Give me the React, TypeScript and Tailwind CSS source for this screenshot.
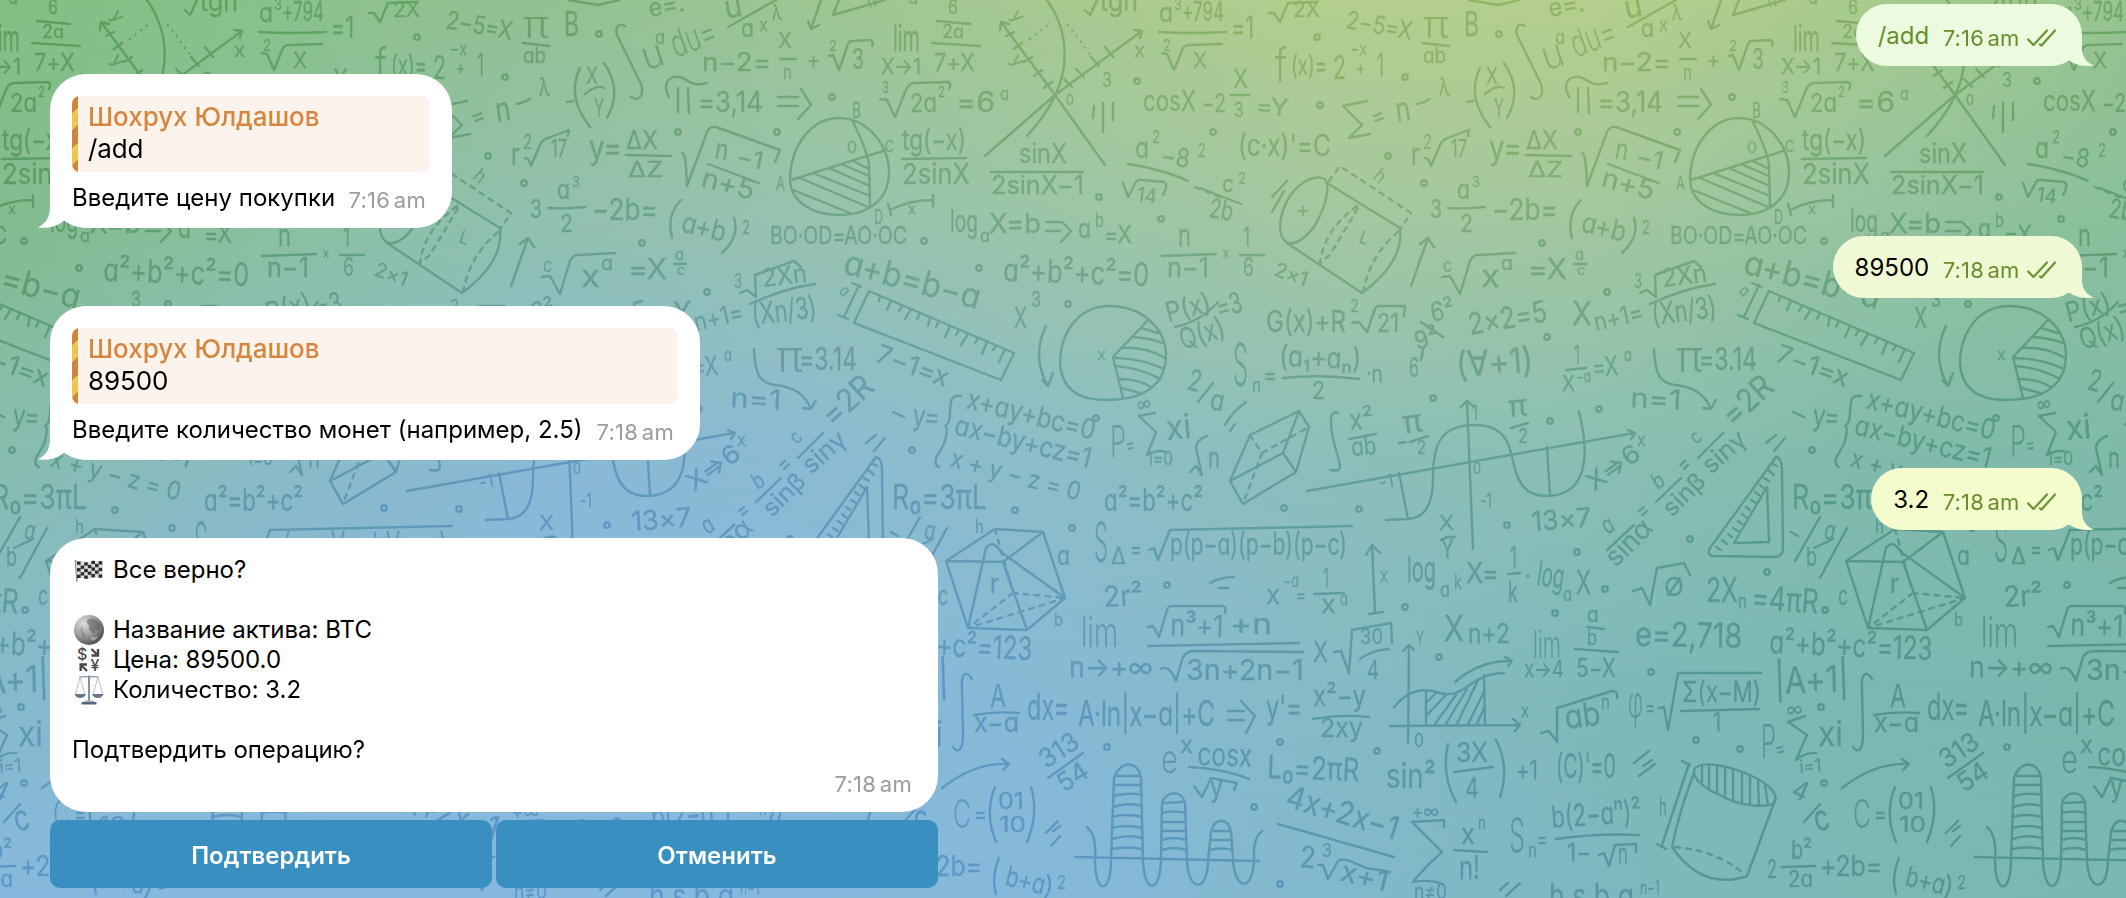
import type { ReactNode } from "react";

/* ---------- Wallpaper ---------- */

const STOPS = [0, 266, 531, 797, 1063, 1329, 1595, 1860, 2126];
const MESH: { y: number; colors: string[] }[] = [
  { y: 0, colors: ["#85be84", "#8ac18b", "#93c292", "#9dc693", "#a8ca90", "#b4cf8e", "#b5cf8d", "#a9cb8e", "#97c48f"] },
  { y: 225, colors: ["#84bc90", "#8ac0a0", "#91c0b0", "#96c2b0", "#9bc5a8", "#a3c7a1", "#a2c79f", "#95c3a2", "#89bf9b"] },
  { y: 449, colors: ["#87bdae", "#8abbc4", "#89b9d5", "#8bbbd3", "#8dbec6", "#8dbfba", "#8bbfb4", "#82bbac", "#80bbaa"] },
  { y: 674, colors: ["#86bac8", "#87b9da", "#87b9dc", "#87b9dc", "#88bad4", "#86bbc4", "#7fb9b9", "#7cb8b2", "#7bb7ae"] },
  { y: 898, colors: ["#86b8dd", "#86b8dd", "#86b8dd", "#86b8dd", "#85b8d9", "#82b8cc", "#7fb8bf", "#7cb8b4", "#7ab7b0"] },
];

// text, x, baseline, width, font size, rotation
type Note = [string, number, number, number, number, number?];

const NOTES: Note[] = [
  ["6", 948, 14, 10, 20], ["2a", 942, 38, 22, 18], ["7+X", 934, 71, 41, 24],
  ["lim", 893, 51, 27, 36], ["X→1", 881, 74, 40, 22],
  ["n−2=", 702, 71, 69, 25], ["X", 778, 48, 14, 22], ["n", 783, 79, 9, 20], ["+", 807, 68, 13, 24], ["2", 829, 51, 8, 15], ["3", 852, 69, 12, 28],
  ["u", 646, 71, 22, 40, -18], ["a", 655, 44, 10, 20], ["du=", 676, 58, 46, 38, -20],
  ["u", 726, 19, 18, 32, -10], ["a", 741, 37, 13, 25], ["x", 759, 31, 9, 17], ["λ", 772, 20, 10, 22],
  ["n", 869, 8, 9, 18, -15], ["a", 908, 4, 10, 20], ["e=.", 650, 17, 36, 25, -10],
  ["=3,14", 698, 112, 65, 29], ["B", 852, 118, 9, 22],
  ["O", 847, 153, 10, 16], ["C", 885, 152, 9, 16], ["A", 776, 190, 9, 18], ["D", 874, 224, 9, 20], ["x", 908, 214, 8, 14],
  ["3", 882, 93, 7, 16], ["2a", 910, 112, 27, 26], ["2", 938, 97, 7, 14], ["=6", 956, 112, 39, 28], ["a", 1000, 100, 9, 18],
  ["y", 1010, 16, 10, 18, 50], ["y", 1010, 60, 11, 18, 50], ["x", 1134, 57, 11, 20], ["0", 1066, 105, 8, 15], ["3", 1102, 87, 10, 20],
  ["tgn", 1100, 11, 38, 28],
  ["a", 1159, 22, 14, 27], ["3", 1174, 10, 8, 16], ["+794", 1182, 21, 42, 27], ["=1", 1231, 38, 23, 30], ["2", 1163, 51, 8, 16], ["X", 1193, 68, 14, 22],
  ["cosX", 1143, 111, 53, 28], ["−2", 1202, 112, 24, 26], ["X", 1233, 88, 15, 26], ["3", 1233, 117, 11, 20], ["=Y", 1255, 114, 33, 24, 4],
  ["y=", 1489, 159, 33, 33], ["ΔX", 626, 149, 32, 25], ["ΔZ", 628, 177, 35, 22],
  ["n", 714, 158, 13, 28, 10], ["−1", 735, 164, 27, 24, 12], ["n+5", 700, 186, 54, 27, 15],
  ["3", 1430, 218, 12, 26], ["a", 1457, 199, 13, 26], ["3", 1472, 187, 8, 15], ["2", 1460, 232, 13, 24], ["−2b=", 1492, 220, 66, 30],
  ["a+b", 680, 231, 45, 28, 14], ["2", 742, 234, 8, 18], ["BO·OD=AO·OC", 770, 244, 137, 24],
  ["log", 950, 232, 28, 31], ["a", 980, 242, 10, 18], ["X=b", 989, 233, 52, 27], ["a", 1078, 238, 13, 26], ["b", 1095, 227, 9, 19], ["=X", 1104, 243, 28, 24],
  ["tg(−x)", 902, 150, 64, 29], ["2sinX", 902, 184, 68, 28], ["sinX", 1019, 163, 48, 27], ["2sinX−1", 991, 194, 93, 25],
  ["a", 1135, 158, 14, 29], ["2", 1152, 143, 8, 17], ["−8", 1160, 164, 29, 26, 8], ["2", 1198, 157, 8, 18], ["14", 1136, 201, 20, 20, 8],
  ["c", 1222, 192, 12, 24], ["2", 1238, 184, 8, 16], ["2b", 1208, 217, 24, 27, 10],
  ["(c·x)'=C", 1238, 156, 93, 30],
  ["=", 1374, 126, 14, 24, -20], ["n", 1397, 122, 15, 34, -8], ["λ", 1439, 96, 11, 25],
  ["X", 1486, 84, 12, 23], ["Y", 1494, 117, 10, 25],
  ["f", 1275, 82, 12, 48], ["(x)=", 1291, 75, 36, 27], ["2", 1333, 79, 13, 32], ["−x", 1350, 55, 17, 18], ["+", 1356, 75, 9, 20], ["1", 1377, 76, 7, 31],
  ["2X", 1293, 17, 27, 22], ["2−5=X", 1345, 28, 67, 25, 10],
  ["π", 1423, 38, 26, 38], ["ab", 1423, 63, 23, 22], ["B", 1464, 36, 15, 34],
  ["r", 1411, 165, 9, 30], ["2", 1423, 149, 9, 20], ["17", 1451, 157, 16, 24],
  ["h", 1372, 178, 10, 20, 40], ["+", 1297, 217, 12, 22], ["L", 1358, 242, 9, 18, 20], ["2×1", 1273, 275, 34, 20, 20],
  ["n", 1178, 246, 13, 31], ["n−1", 1167, 277, 42, 27], ["×", 1222, 259, 8, 18], ["1", 1243, 246, 7, 25], ["6", 1243, 276, 11, 26],
  ["a²+b²+c²=0", 1003, 281, 146, 32, 2],
  ["c", 1443, 272, 9, 20], ["x", 1481, 287, 19, 30], ["a", 1501, 270, 12, 19], ["=X", 1528, 279, 39, 28], ["a", 1575, 260, 9, 15], ["c", 1577, 275, 8, 14],
  ["a+b=b−a", 842, 273, 140, 34, 15], ["a", 838, 292, 8, 17, 45],
  ["3", 734, 288, 8, 20], ["2Xn", 763, 287, 45, 25, -7], ["(Xn/3)", 753, 325, 65, 30, -7], ["X", 1572, 325, 20, 33], ["n+1=", 1596, 331, 50, 25, -13],
  ["X", 1014, 328, 13, 28], ["3", 1031, 307, 10, 22], ["x", 1097, 360, 9, 16],
  ["P(x)", 1168, 322, 46, 27, -14], ["Q(x)", 1183, 350, 46, 29, -18], ["=3", 1219, 318, 26, 29, -15],
  ["G(x)+R", 1266, 332, 80, 30], ["2", 1350, 312, 9, 17], ["21", 1377, 332, 22, 26],
  ["6²", 1432, 322, 24, 27, -10], ["9²", 1417, 350, 24, 25, -15], ["6", 1409, 377, 10, 27],
  ["2×2=5", 1470, 335, 80, 30, -10], ["(∀+1)", 1457, 377, 77, 35, -4],
  ["1", 1574, 364, 6, 25], ["X", 1562, 391, 13, 21], ["−a", 1576, 382, 15, 15], ["=X", 1593, 377, 26, 27, -5], ["a", 1624, 361, 8, 18],
  ["π", 776, 372, 27, 44], ["=3.14", 799, 370, 58, 31], ["7−1=x", 874, 361, 76, 26, 20], ["n=1", 730, 407, 51, 27, 3],
  ["=2R", 833, 428, 58, 32, -42],
  ["y=", 912, 425, 27, 29, 5], ["x+ay+bc=0", 965, 408, 132, 28, 14], ["ax−by+cz=1", 953, 434, 140, 28, 14], ["x + y − z = 0", 949, 466, 134, 25, 15],
  ["P", 2010, 457, 16, 44], ["=", 2027, 453, 9, 22, -10], ["∞", 2038, 412, 14, 20, -10], ["xi", 2067, 440, 25, 34, -5], ["i=0", 2049, 465, 24, 18],
  ["2", 2086, 389, 13, 30, 15], ["a", 1209, 409, 14, 29, 10],
  ["S", 1233, 386, 15, 60], ["n", 1252, 392, 9, 20], ["=", 1263, 383, 14, 24], ["(a₁+aₙ)", 1279, 366, 82, 29, 2], ["2", 1312, 399, 13, 24], ["·n", 1366, 382, 17, 24],
  ["x²", 1350, 430, 24, 28, -5], ["ab", 1352, 456, 25, 25, -5], ["π", 1404, 434, 20, 32, -8], ["2", 1417, 454, 9, 18],
  ["1", 1472, 420, 6, 20], ["π", 1509, 417, 19, 30, -5], ["2", 1518, 443, 10, 20], ["x", 1637, 446, 9, 18], ["0", 1473, 474, 8, 16], ["-1", 1480, 507, 12, 18], ["-1", 1380, 489, 15, 18, -10],
  ["X⇒6", 1594, 492, 60, 25, -36],
  ["c", 1697, 445, 9, 20, -45], ["sinγ", 1711, 475, 50, 25, -42], ["=", 1685, 474, 12, 24, -45],
  ["b", 1657, 490, 11, 22, -30], ["sinβ", 1672, 518, 50, 24, -45], ["=", 1643, 520, 12, 24, -40],
  ["a", 1607, 535, 11, 25, -30], ["sinα", 1616, 568, 54, 27, -45],
  ["13×7", 1532, 531, 60, 27, -4], ["X", 1439, 530, 15, 20], ["Y", 1441, 558, 13, 25],
  ["R₀=3πL", 1792, 509, 95, 34], ["a²=b²+c²", 1104, 511, 99, 31], ["n", 1208, 468, 12, 28],
  ["a", 1823, 538, 11, 26, 12], ["b", 1806, 566, 11, 26],
  ["r", 990, 593, 9, 26], ["h", 975, 533, 9, 18], ["a", 1057, 565, 13, 27], ["b", 1054, 626, 9, 18], ["c", 938, 605, 10, 27],
  ["S", 1094, 562, 14, 56], ["Δ", 1111, 564, 15, 23], ["=", 1130, 557, 12, 24], ["p(p−a)(p−b)(p−c)", 1170, 555, 177, 31],
  ["2r²", 1104, 607, 39, 29, -3], ["x", 1266, 604, 14, 27], ["−a", 1283, 587, 16, 17], ["=", 1296, 602, 10, 20], ["1", 1323, 587, 6, 26], ["x", 1321, 613, 15, 25], ["a", 1340, 605, 8, 17],
  ["x", 1380, 582, 8, 20], ["log", 1407, 582, 29, 36], ["a", 1440, 597, 10, 21], ["k", 1454, 589, 8, 20], ["X=", 1466, 583, 33, 28], ["1", 1510, 567, 7, 29], ["k", 1508, 602, 10, 29],
  ["·", 1525, 586, 6, 28], ["log", 1536, 585, 27, 34, 8], ["a", 1563, 601, 9, 20], ["X", 1576, 594, 15, 32],
  ["lim", 1081, 647, 37, 42], ["n→+∞", 1069, 677, 84, 28], ["n³+1", 1170, 635, 53, 30, 2], ["+n", 1230, 634, 42, 28], ["3n+2n−1", 1186, 680, 118, 28],
  ["X", 1313, 662, 15, 28], ["30", 1360, 644, 23, 22], ["4", 1367, 679, 12, 26], ["Y", 1416, 645, 8, 18], ["x", 1521, 717, 8, 17], ["0", 1414, 747, 10, 18],
  ["X", 1444, 641, 20, 36], ["n+2", 1468, 643, 42, 27], ["Ø", 1664, 596, 20, 26], ["2X", 1706, 602, 32, 34], ["n", 1738, 608, 9, 20], ["=4πR", 1751, 609, 67, 34, 4],
  ["lim", 1533, 658, 28, 38], ["x→4", 1524, 677, 40, 23], ["a", 1587, 622, 12, 22], ["b", 1587, 645, 10, 21], ["5−X", 1576, 677, 40, 25],
  ["e=2,718", 1635, 646, 107, 34, 1], ["a²+b²+c²=123", 1769, 653, 163, 32, 2.5],
  ["ab", 1566, 729, 36, 33, -7], ["n", 1601, 709, 9, 20], ["φ", 1628, 718, 15, 46], ["=", 1645, 715, 10, 22], ["Σ(x−M)", 1682, 702, 79, 29], ["1", 1713, 731, 8, 25],
  ["|A+1|", 1775, 694, 74, 37, -2], ["∞", 1787, 717, 16, 20, -5], ["P", 1761, 758, 15, 46], ["=", 1777, 757, 10, 22, -15], ["xi", 1818, 746, 25, 34], ["i=1", 1800, 773, 22, 18, -5],
  ["A", 990, 707, 16, 31], ["x−a", 974, 732, 45, 26], ["dx=", 1027, 720, 42, 37], ["A·ln|x−a|+C", 1078, 726, 137, 35], ["y'=", 1266, 719, 36, 32], ["x²−y", 1313, 706, 53, 29], ["2xy", 1320, 737, 43, 26],
  ["313", 1046, 769, 42, 26, -33], ["54", 1064, 793, 32, 26, -33],
  ["e", 1161, 773, 17, 40], ["x", 1180, 753, 13, 23], ["cosx", 1197, 765, 55, 32, 2], ["y", 1210, 797, 13, 29], ["L₀=2πR", 1267, 778, 92, 32, 2],
  ["sin²", 1386, 788, 50, 34], ["3X", 1456, 762, 32, 27], ["4", 1465, 798, 14, 29], ["+1", 1516, 779, 22, 26], ["(C)'=0", 1556, 778, 60, 34],
  ["C", 953, 828, 18, 40], ["=", 974, 823, 13, 26], ["01", 998, 809, 26, 23], ["10", 999, 832, 27, 21],
  ["2", 1767, 878, 10, 26], ["b²", 1791, 859, 21, 26], ["2a", 1788, 887, 25, 23], ["+2b=", 1820, 876, 62, 29], ["b+a", 1904, 885, 40, 28, 14], ["2", 1957, 889, 9, 19],
  ["4x+2x−1", 1284, 806, 116, 32, 17], ["2", 1299, 867, 16, 30, 5], ["3", 1322, 857, 10, 19], ["x+1", 1339, 880, 48, 28, 14],
  ["+∞", 1412, 818, 27, 19], ["n≠0", 1414, 899, 33, 21], ["x", 1461, 844, 14, 28], ["n", 1478, 829, 8, 18], ["n!", 1459, 879, 21, 32],
  ["S", 1509, 852, 16, 48], ["n", 1528, 857, 9, 20], ["=", 1537, 847, 10, 24], ["b(2−aⁿ)²", 1552, 828, 90, 31, -4], ["1−", 1567, 861, 24, 24], ["n", 1618, 863, 10, 26],
  ["h  s b  a", 1549, 908, 85, 34], ["n−1", 1640, 894, 20, 18], ["h", 1659, 815, 8, 24], ["4", 1790, 796, 15, 27, 25], ["c", 1817, 832, 15, 36, -15],
];

const RINGS: [number, number][] = [
  [832, 97], [678, 132], [777, 132], [642, 243], [924, 241], [707, 292], [1137, 81], [1213, 132], [1099, 197], [1161, 219], [979, 268], [1068, 304], [1096, 418],
  [1317, 37], [1499, 34], [1405, 77], [1320, 105], [1388, 156], [1424, 183], [1547, 337], [1433, 398], [1550, 421], [1599, 409], [1812, 450], [1284, 508], [1359, 509],
  [1507, 525], [1577, 552], [1690, 539], [1015, 510], [1072, 528], [1167, 585], [1405, 607], [1439, 657], [1280, 742], [1377, 751], [1107, 747], [1254, 807], [1280, 884],
  [1605, 589], [1555, 613], [1767, 572], [1825, 610], [1651, 672], [1696, 740], [1740, 749], [1821, 707], [1824, 783],
];

const STROKES: string[] = [
  // fraction bars, roots and brackets
  "M937 21L970 24M932 43L980 46M780 59H796M829 56L833 55L839 70L848 44Q849 41 852 41L870 40Q874 41 872 46",
  "M625 26C618 22 615 28 617 35L641 84C645 97 637 102 631 97M728 27L776 0M821 0L811 29M808 21L811 29L819 25M839 0L833 15L885 0",
  "M669 97C662 84 668 76 679 77C688 78 690 88 707 83M678 88V112M688 88L689 113",
  "M778 97H798M778 106H798M801 89L811 105L798 119",
  "M888 204L891 215M890 210Q910 200 932 200M933 195V207",
  "M880 99L887 100L895 117L906 90Q909 83 914 83L948 82Q952 83 949 89",
  "M1085 10L1090 15L1097 0M1159 32Q1190 34 1226 32M1162 53L1167 54L1174 70L1183 48Q1185 45 1190 45L1222 44M1231 95H1249",
  "M626 155L671 156M682 153Q686 152 687 186L706 135Q708 126 716 127L780 150L775 162M708 164L759 183M1448 208Q1465 209 1485 207",
  "M681 200Q666 215 672 238M734 218Q740 237 722 253M1046 222H1060M1046 231H1060M1062 222L1071 231L1061 242",
  "M902 159L966 158M991 172H1083M1128 164Q1165 170 1188 181M1123 183L1128 197L1136 182Q1138 179 1142 180L1164 182Q1169 184 1163 195M1200 188L1241 204",
  "M1367 101L1343 106L1362 125L1349 138L1370 134M1417 104Q1424 103 1430 99M1480 68Q1466 97 1490 127M1485 94Q1497 84 1504 88M1504 63Q1523 90 1507 118M1467 102L1473 101",
  "M1269 13L1274 13L1280 22L1288 3L1316 2M1423 43L1449 46M1469 0L1498 5L1519 0M1425 158Q1429 158 1431 166L1440 145Q1442 140 1448 138L1469 130L1468 136",
  "M1162 256L1216 254M1240 255H1264M1442 277L1450 276L1460 294L1469 264Q1472 254 1480 255L1515 253M1574 264H1586M1411 286L1428 238M1420 244L1428 238L1434 247",
  "M740 293L747 290L756 297L755 275L794 261L801 267M750 304Q785 288 815 284M1175 327Q1200 322 1218 302",
  "M1352 323L1359 322L1367 332L1375 309Q1376 306 1380 306L1405 306L1404 316M1421 322L1443 337M1423 350L1421 360M1566 370L1586 368",
  "M1654 349C1655 375 1660 383 1675 385C1695 387 1705 395 1711 409M1703 408L1711 409L1716 400M1046 326Q1031 357 1048 386M1042 380L1048 386L1053 373",
  "M893 412L904 417M961 396C950 394 951 402 950 412Q950 424 945 426Q949 428 944 444L936 458Q934 465 939 467",
  "M2055 413L2039 416L2056 432L2047 455Q2058 449 2066 452M1213 383L1198 402M1283 378Q1320 374 1359 379M1246 402Q1232 412 1225 425M1235 424L1230 431",
  "M1338 413C1328 408 1330 430 1336 450S1342 472 1330 470M1349 439L1376 434M1410 442L1428 436M1399 443L1406 442M1511 428L1528 423",
  "M1698 458L1723 433M1656 502L1681 478M1607 550L1634 525M1441 540Q1447 536 1455 537M1776 435L1766 443M1785 438L1774 451",
  "M1190 472L1196 466L1202 475L1196 448Q1196 440 1207 436M1791 532L1798 536M1820 517L1795 561M1833 539L1814 548M1847 528L1820 578",
  "M1149 550L1154 548L1158 560L1170 530L1352 526M1210 583Q1220 577 1234 577M1218 588H1228M1314 594L1344 593",
  "M1372 545L1375 613M1366 555L1372 545L1380 553M1369 614L1383 612M1508 574L1520 573",
  "M1148 627L1153 626L1159 637L1167 610Q1168 605 1176 606L1222 606Q1227 607 1225 613M1148 646L1299 643M1161 669Q1169 664 1176 681L1182 660Q1184 652 1193 651L1303 652",
  "M1334 652L1341 651L1349 673L1352 630L1391 623L1392 643M1360 659Q1372 650 1389 649",
  "M1633 591L1642 588L1650 605L1657 568L1684 563L1690 575M1587 627L1604 629M1575 649L1618 652M1541 733L1549 731L1557 742V708L1612 691Q1618 690 1617 698",
  "M1659 708L1664 707L1668 730L1678 673H1761M1681 711L1759 709M1805 716L1788 722L1807 735L1796 760Q1806 752 1816 753",
  "M972 679C965 668 961 675 962 690L963 735C963 752 957 753 953 747M974 715Q995 711 1019 713M1228 711H1244M1228 720H1244M1241 701L1255 716L1246 733M1313 719Q1340 714 1369 717",
  "M942 788Q975 762 1009 764M1002 759L1009 764L1003 770M1048 778L1083 753M1189 767Q1225 769 1249 779M1194 786L1202 797L1211 778L1237 783L1234 790",
  "M1448 744Q1441 775 1456 802M1454 772L1493 767M1496 740Q1510 767 1500 797M1649 751L1634 763M1652 760L1643 766M1655 764L1639 776",
  "M995 787Q984 813 996 842M1031 787Q1039 813 1027 842M1058 821L1046 833M1060 826L1053 831M1060 836L1051 846",
  "M1782 867L1815 866M1899 858Q1891 877 1896 894M1948 875Q1953 887 1945 898M1278 824L1394 857M1318 865L1323 865L1328 879L1338 861Q1341 858 1350 861L1366 868L1390 872",
  "M1444 827V820L1412 822L1442 852Q1422 870 1413 882Q1430 879 1442 884M1454 850L1487 852M1556 839Q1600 833 1639 835M1599 855L1604 853L1609 866L1615 845L1636 844V852",
  "M1508 883L1500 890M1520 883L1506 896M1820 804L1804 822",
  // circle with chords
  "M839 118C812 118 791 145 790 178C790 202 812 215 840 215C868 215 889 200 889 172C889 145 867 118 839 118Z",
  "M791 180L883 151M853 122Q867 150 869 165L870 207M813 173L870 196M829 168L870 186M841 164L869 176M853 161L867 168M800 178L868 207M793 190L850 213",
  // crossed axes
  "M1001 22L1055 95L1105 165M1142 31L1055 95L985 156M1047 0Q1068 30 1064 65T1027 136M1000 30L1001 22L1009 24M1134 30L1142 31L1140 38",
  "M1006 36L1014 32M1014 49L1022 43M1024 62L1032 57M1034 76L1042 70M1044 88L1052 82M1064 79L1072 87M1076 69L1084 77M1091 57L1099 66M1105 47L1113 57",
  "M1094 106L1093 118M1103 103V132M1113 103V120",
  // tilted cylinder
  "M1322 178C1332 180 1327 205 1315 225C1305 240 1292 247 1285 241C1276 232 1280 210 1292 193C1302 181 1315 175 1322 178ZM1327 183L1400 228Q1404 262 1362 293L1287 243",
  "M1287 181L1272 197M1284 191L1272 212",
  // ruler
  "M869 291L1014 353L1001 380L854 323ZM859 285L844 317M852 283L861 287M838 315L848 319",
  "M880 296L879 301M891 301L887 310M902 306L899 311M911 309L905 319M920 313L917 319M930 317L928 326M939 321L936 327M950 326L945 337M959 330L956 335M968 334L961 345M978 338L975 343M987 342L982 354M996 346L993 350M1005 349L999 362",
  // pie
  "M1109 306C1082 306 1061 328 1060 362C1061 390 1080 400 1106 400C1140 400 1166 388 1166 354C1165 328 1142 306 1109 306ZM1148 320L1113 357L1123 398",
  "M1141 328L1158 333M1132 337Q1150 338 1163 343M1121 348Q1145 346 1165 358M1114 358Q1140 358 1164 369M1115 366Q1140 368 1160 379M1118 379Q1138 379 1151 387M1121 388L1140 393",
  // prism
  "M1299 411L1309 427L1296 472L1243 504L1230 481L1250 435ZM1299 411L1283 453L1230 481M1283 453L1296 472",
  // sine plot
  "M1307 491L1634 433M1628 430L1635 433L1631 439M1467 401L1473 549M1461 407L1467 401L1473 406M1386 520L1408 519C1432 518 1433 490 1433 478C1433 445 1440 425 1475 425C1515 425 1510 460 1517 475C1522 490 1532 496 1547 496C1595 495 1586 440 1579 412M1399 473L1408 519M1547 447L1550 495",
  // set square
  "M1776 457Q1782 458 1782 470L1783 548Q1783 556 1776 557L1712 556Q1707 555 1710 548ZM1767 487L1769 542L1734 543Z",
  "M1773 464L1777 466M1768 470L1774 475M1764 478L1769 481M1760 485L1765 489M1755 492L1759 495M1751 500L1756 503M1746 507L1750 510M1742 514L1747 518M1738 521L1742 524M1733 528L1738 531M1728 534L1732 537M1722 540L1727 544M1716 547L1721 550",
  // solid
  "M995 529L1043 532L1065 598L1027 630L968 628L946 561ZM946 561L1003 562L1043 532M968 628L986 548Q993 539 1001 552L1065 598M1003 562L1027 630",
  // area plot
  "M1409 645L1408 743M1403 651L1409 645L1414 650M1390 726L1520 725M1513 719L1520 725L1515 731M1394 707C1410 688 1425 688 1440 693C1465 700 1470 673 1504 673M1426 691V725M1484 675L1485 724M1455 682Q1480 660 1512 661M1505 657L1512 661L1508 666",
  "M1426 703L1436 693M1427 715L1446 695M1435 724L1456 695M1446 724L1467 689M1457 724L1478 680M1468 724L1484 692M1477 724L1485 706",
  // wells
  "M1075 857L1259 861M1087 827Q1097 835 1095 860C1095 895 1111 895 1111 860L1114 778C1120 760 1138 760 1141 778L1143 860C1144 895 1161 895 1161 857L1162 803C1167 790 1182 790 1185 803L1187 860C1188 893 1208 893 1208 860L1211 832C1215 817 1228 817 1231 832L1233 860C1235 892 1254 892 1254 857Q1253 838 1262 831",
  "M1117 776H1139M1115 785H1141M1114 796Q1128 792 1142 795M1113 807Q1128 802 1142 806M1112 817Q1128 813 1142 817M1112 828Q1128 824 1142 828M1112 839Q1128 834 1142 838M1112 849Q1128 846 1142 849M1164 803L1183 802M1162 813Q1173 810 1186 813M1162 822H1186M1162 831H1186M1162 840Q1174 836 1186 840M1162 850Q1174 846 1186 850M1214 831H1230M1211 840H1232M1210 850Q1222 847 1232 850",
  // drum
  "M1694 770C1700 758 1735 768 1752 776C1768 784 1778 792 1775 802C1768 809 1738 806 1722 796C1706 789 1693 780 1694 770ZM1694 773Q1679 812 1672 847Q1702 891 1747 876L1775 800M1689 764L1662 845M1682 761L1690 765M1657 844L1666 849",
  "M1702 765V782M1709 766V788M1717 767V793M1725 769V798M1733 771V801M1742 774V804M1750 777V805M1758 781L1759 806M1765 786L1768 805",
];

const DASHES: string[] = [
  "M1195 187L1222 198M1329 181L1340 166L1411 213L1401 228M1357 206Q1324 230 1320 263L1330 255L1358 208M1398 232Q1370 255 1363 292",
  "M1250 435L1262 453L1309 427M1262 453L1243 504M995 529L1013 593L1065 598M1013 593L968 628L1065 598M1675 847Q1715 850 1745 874",
];

function Wallpaper() {
  return (
    <svg className="absolute inset-0 h-full w-full isolate" viewBox="0 0 2126 898" preserveAspectRatio="none" aria-hidden="true">
      <defs>
        {MESH.map((row, i) => (
          <g key={row.y}>
            <linearGradient id={`row${i}`} gradientUnits="userSpaceOnUse" x1="0" y1="0" x2="2126" y2="0">
              {row.colors.map((c, j) => (
                <stop key={j} offset={STOPS[j] / 2126} stopColor={c} />
              ))}
            </linearGradient>
            {i > 0 && (
              <>
                <linearGradient id={`fade${i}`} gradientUnits="userSpaceOnUse" x1="0" y1={MESH[i - 1].y} x2="0" y2={row.y}>
                  <stop offset="0" stopColor="#fff" stopOpacity="0" />
                  <stop offset="1" stopColor="#fff" stopOpacity="1" />
                </linearGradient>
                <mask id={`mask${i}`} maskUnits="userSpaceOnUse" x="0" y="0" width="2126" height="898">
                  <rect width="2126" height="898" fill={`url(#fade${i})`} />
                </mask>
              </>
            )}
          </g>
        ))}
        <g id="tile">
          {NOTES.map(([text, x, y, width, size, rotate], i) => (
            <text
              key={i}
              x={x}
              y={y}
              fontSize={size}
              fontWeight={size > 37 ? 300 : 400}
              stroke="#000"
              strokeWidth={size > 37 ? 0 : 0.35}
              textLength={width}
              lengthAdjust="spacingAndGlyphs"
              transform={rotate ? `rotate(${rotate} ${x} ${y})` : undefined}
            >
              {text}
            </text>
          ))}
          <g fill="none" stroke="#000" strokeWidth="2.4" strokeLinecap="round" strokeLinejoin="round">
            {STROKES.map((d, i) => (
              <path key={i} d={d} />
            ))}
            {DASHES.map((d, i) => (
              <path key={i} d={d} strokeDasharray="5 6" />
            ))}
            <path d="M1030 39L1050 23M1068 25L1092 57" strokeDasharray="0.1 7" />
            {RINGS.map(([x, y], i) => (
              <circle key={i} cx={x} cy={y} r="2.7" />
            ))}
          </g>
        </g>
      </defs>
      {MESH.map((row, i) => (
        <rect key={row.y} width="2126" height="898" fill={`url(#row${i})`} mask={i > 0 ? `url(#mask${i})` : undefined} />
      ))}
      <g className="font-['Inter','DejaVu_Sans',sans-serif] opacity-65 mix-blend-soft-light [font-feature-settings:'cv11','calt'_0]">
        <use href="#tile" x="-1800" />
        <use href="#tile" x="-900" />
        <use href="#tile" />
        <use href="#tile" x="900" />
      </g>
    </svg>
  );
}

/* ---------- Messages ---------- */

function Incoming({ width, author, quote, text, time }: { width: string; author: string; quote: string; text: string; time: string }) {
  return (
    <div className={`relative ml-[50px] h-[154px] rounded-[36px] bg-white pl-[22px] pr-[22px] pt-[22px] ${width}`}>
      <svg className="absolute -left-3 bottom-0 h-[38px] w-[34px]" viewBox="0 0 34 38" aria-hidden="true">
        <path d="M12 0V17C12 28 7 34 0 37.4C11 39 20 36 26 30.5L34 4Z" fill="#fff" />
      </svg>
      <div className="flex h-[76px] overflow-hidden rounded-lg bg-[#fcf3ec]">
        <div className="w-1.5 shrink-0 bg-[repeating-linear-gradient(135deg,#d4833c_0_12.3px,#efc54f_12.3px_24.6px)]" />
        <div className="pl-2.5 pt-[5px] text-[26px] leading-[32px]">
          <div className="font-medium tracking-[-0.05px] text-[#d6873f]">{author}</div>
          <div className="tracking-[-0.1px] text-black">{quote}</div>
        </div>
      </div>
      <div className="mt-[11px] flex items-baseline justify-between whitespace-nowrap pr-1 leading-[30px]">
        <span className="text-[24px] text-black">{text}</span>
        <span className="translate-y-[2px] text-[22px] tracking-[0.3px] text-[#9b9b9b] [word-spacing:-3px]">{time}</span>
      </div>
    </div>
  );
}

function Outgoing({ text, time, tone, textTone }: { text: string; time: string; tone: string; textTone: string }) {
  return (
    <div className={`relative mr-[44px] flex h-[62px] items-baseline self-end whitespace-nowrap rounded-full pl-[22px] pr-[26px] pt-[17px] ${tone}`}>
      <svg className="absolute -right-3 bottom-0 h-[31px] w-[30px] fill-current" viewBox="0 0 30 31" aria-hidden="true">
        <path d="M4 0H18V8C17 20 21 27 30 30.6C20 32 11 30 4.500 25.200Z" />
      </svg>
      <span className={`text-[24px] leading-[30px] ${textTone}`}>{text}</span>
      <span className="ml-[13.500px] translate-y-[2px] text-[22px] leading-[30px] tracking-[0.2px] text-[#668f2b] [word-spacing:-3px]">{time}</span>
      <svg className="ml-[7.500px] h-[18px] w-[29px] self-start translate-y-[8px]" viewBox="0 0 29 18" fill="none" stroke="#6d9438" strokeWidth="2.3" strokeLinecap="round" strokeLinejoin="round" aria-hidden="true">
        <path d="M1.200 10.500L6.500 16L20 1.500M13 15.500L14.500 16.500L28 1.500" />
      </svg>
    </div>
  );
}

function FlagIcon() {
  const cells: ReactNode[] = [];
  for (let r = 0; r < 5; r++)
    for (let c = 0; c < 7; c++)
      if ((r + c) % 2 === 0)
        cells.push(<rect key={`${r}-${c}`} x={3 + c * 3.6} y={4.5 + r * 3.3 + Math.sin(c) * 0.9} width="3.6" height="3.3" fill="#2d2d2d" />);
  return (
    <svg className="h-[26px] w-[30px]" viewBox="0 0 30 26" aria-hidden="true">
      <path d="M1.500 3L3 24.500" stroke="#8b8b8b" strokeWidth="1.6" />
      <path d="M2 4.500C8 3 12 6 18 4.500C22 3.500 26 3.500 28.500 4L28.500 20.500C22 19.500 19 22 13 21.500C9 21 6 20 3 21.500Z" fill="#dcdcdc" />
      {cells}
    </svg>
  );
}

function MoonIcon() {
  return (
    <svg className="h-[30px] w-[30px]" viewBox="0 0 30 30" aria-hidden="true">
      <defs>
        <radialGradient id="moon" cx="0.32" cy="0.28" r="0.8">
          <stop offset="0" stopColor="#dedede" />
          <stop offset="0.5" stopColor="#a0a0a0" />
          <stop offset="1" stopColor="#474747" />
        </radialGradient>
      </defs>
      <circle cx="15" cy="15" r="15" fill="url(#moon)" />
      <path d="M15 4C19 3 24 5 26 10C27 14 24 16 21 15C22 19 18 19 17 16C13 15 17 12 14 9C12 7 13 5 15 4Z" fill="#555" opacity="0.55" />
      <path d="M7 12C9 11 9 14 8 16C11 17 10 20 13 21L10 23C8 20 6 18 7 12Z" fill="#777" opacity="0.5" />
      <path d="M16 23C19 21 21 23 24 21C22 26 18 27 16 23Z" fill="#d0d0d0" opacity="0.5" />
    </svg>
  );
}

function ExchangeIcon() {
  return (
    <svg className="h-[26px] w-[30px]" viewBox="0 0 30 26" fill="none" aria-hidden="true">
      <text x="3" y="13" fontSize="16" fontWeight="500" fill="#4a4a4a" className="font-['Inter',sans-serif]">$</text>
      <text x="16.500" y="24" fontSize="16" fontWeight="500" fill="#4a4a4a" className="font-['Inter',sans-serif]">¥</text>
      <path d="M17.500 2L23 7.500M24 2V8.500H17.500" stroke="#4a4a4a" strokeWidth="2.400" />
      <path d="M13 24L7.500 18.500M6.700 24V17.500H13" stroke="#4a4a4a" strokeWidth="2.400" />
    </svg>
  );
}

function ScalesIcon() {
  return (
    <svg className="h-[30px] w-[30px]" viewBox="0 0 30 30" fill="none" aria-hidden="true">
      <path d="M15 0.500V27" stroke="#75879c" strokeWidth="1.800" />
      <path d="M5.500 2.500Q10 1 15 2Q20 1 24.500 2.500" stroke="#8798ab" strokeWidth="1.400" />
      <path d="M6 2.500L1.500 19M6 2.500L11 19M24 2.500L19 19M24 2.500L28.500 19" stroke="#b3b9c0" strokeWidth="0.900" />
      <path d="M0.500 19H12Q10.500 23 6.200 23Q2 23 0.500 19ZM18 19H29.500Q28 23 23.800 23Q19.500 23 18 19Z" fill="#65778e" />
      <path d="M11 25.500H19L20.500 27H9.500Z" fill="#a7adb5" />
      <path d="M7.500 27H22.500V29.500H7.500Z" fill="#56677c" />
    </svg>
  );
}

function Line({ icon, children }: { icon: ReactNode; children: ReactNode }) {
  return (
    <div className="flex h-[30px] items-center">
      <span className="flex w-[41px] items-center pl-0.5">{icon}</span>
      <span>{children}</span>
    </div>
  );
}

export default function App() {
  return (
    <div className="relative h-[898px] w-[2126px] overflow-hidden font-['Inter',sans-serif]">
      <Wallpaper />
      <div className="relative flex h-full flex-col items-start gap-2 pt-1">
        <Outgoing text="/add" time="7:16 am" tone="bg-[#ecfbdf] text-[#ecfbdf]" textTone="text-[#668f2b]" />
        <Incoming width="w-[402px]" author="Шохрух Юлдашов" quote="/add" text="Введите цену покупки" time="7:16 am" />
        <Outgoing text="89500" time="7:18 am" tone="bg-[#eff9d3] text-[#eff9d3]" textTone="text-black" />
        <Incoming width="w-[650px]" author="Шохрух Юлдашов" quote="89500" text="Введите количество монет (например, 2.5)" time="7:18 am" />
        <Outgoing text="3.2" time="7:18 am" tone="bg-[#f4fbcd] text-[#f4fbcd]" textTone="text-black" />
        <div className="ml-[50px] w-[888px]">
          <div className="flex h-[274px] flex-col rounded-[36px] bg-white pl-[22px] pr-[26px] pt-[17px] text-[24px] leading-[30px] text-black">
            <Line icon={<FlagIcon />}>Все верно?</Line>
            <div className="h-[30px]" />
            <Line icon={<MoonIcon />}>Название актива: BTC</Line>
            <Line icon={<ExchangeIcon />}>Цена: 89500.0</Line>
            <Line icon={<ScalesIcon />}>Количество: 3.2</Line>
            <div className="h-[30px]" />
            <div className="tracking-[-0.050px]">Подтвердить операцию?</div>
            <div className="mt-1 self-end text-[22px] tracking-[0.3px] text-[#9b9b9b] [word-spacing:-3px]">7:18 am</div>
          </div>
          <div className="mt-2 flex gap-1 text-[24px] font-semibold text-white">
            <button className="h-[68px] flex-1 rounded-[10px] bg-[#3990c0] pt-1">Подтвердить</button>
            <button className="h-[68px] flex-1 rounded-[10px] bg-[#3990c0] pt-1">Отменить</button>
          </div>
        </div>
      </div>
    </div>
  );
}
